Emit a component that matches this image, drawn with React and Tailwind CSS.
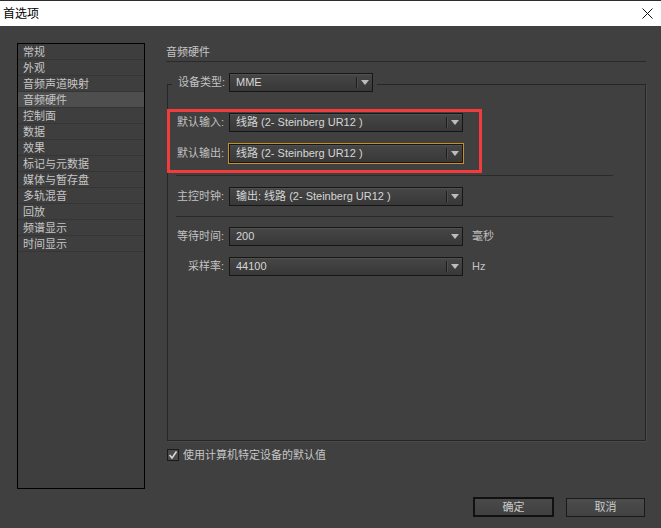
import React from "react";

const F = "font-['Liberation_Sans','Noto_Sans_CJK_SC',sans-serif]";

function Arrow() {
  return (
    <svg width="8" height="5" viewBox="0 0 8 5">
      <path d="M0 0H8L4 5Z" fill="#bcbcbc" />
    </svg>
  );
}

function Dropdown({ value, w, focus, sep = true }) {
  return (
    <div
      className={`relative h-[19px] ${w} flex items-center border border-[#161616] bg-gradient-to-b from-[#464646] to-[#383838] shadow-[inset_0_1px_0_#505050] ${
        focus ? "outline outline-1 outline-[#c8901c]" : ""
      }`}
    >
      <span className="flex-1 pl-[6px] text-[11px] leading-[17px] text-[#d6d6d6] whitespace-nowrap overflow-hidden">
        {value}
      </span>
      <div className={`h-[11px] w-px ${sep ? "bg-[#1c1c1c] shadow-[1px_0_0_#4e4e4e]" : ""}`} />
      <div className="w-[15px] flex justify-center">
        <Arrow />
      </div>
    </div>
  );
}

function Row({ label, value, w = "w-[234px]", focus, sep = true, unit }) {
  return (
    <div className="flex items-center h-[19px]">
      <span className="w-[56px] text-right text-[11px] leading-[15px] text-[#c2c2c2] whitespace-nowrap">
        {label}
      </span>
      <div className="ml-[5px]">
        <Dropdown value={value} w={w} focus={focus} sep={sep} />
      </div>
      {unit && (
        <span className="ml-[9px] text-[11px] leading-[15px] text-[#c2c2c2]">{unit}</span>
      )}
    </div>
  );
}

const items = [
  "常规",
  "外观",
  "音频声道映射",
  "音频硬件",
  "控制面",
  "数据",
  "效果",
  "标记与元数据",
  "媒体与暂存盘",
  "多轨混音",
  "回放",
  "频谱显示",
  "时间显示",
];

export default function App() {
  return (
    <div className={`w-[661px] h-[528px] bg-[#404040] flex flex-col overflow-hidden ${F}`}>
      <div className="h-[26px] bg-white border-t border-[#2e2e2e] flex items-center justify-between pl-[3px] pr-[8px]">
        <span className="text-[12px] leading-[16px] text-black">首选项</span>
        <svg width="11" height="11" viewBox="0 0 11 11">
          <path d="M0.5 0.5L10.5 10.5M10.5 0.5L0.5 10.5" stroke="#111" strokeWidth="1" />
        </svg>
      </div>
      <div className="flex pl-[17px] pt-[17px]">
        <div className="w-[128px] h-[446px] border border-black bg-[#3e3e3e]">
          {items.map((t) => (
            <div
              key={t}
              className={`h-[16px] border-b border-[#353535] pl-[5px] pt-px flex items-center text-[11px] leading-[15px] text-[#c6c6c6] ${
                t === "音频硬件" ? "bg-[#4e4e4e]" : ""
              }`}
            >
              {t}
            </div>
          ))}
        </div>

        <div className="ml-[21px] w-[480px] flex flex-col">
          <div className="h-[18px] flex items-center text-[11px] leading-[15px] text-[#c6c6c6]">
            音频硬件
          </div>
          <div className="h-px bg-[#2a2a2a]" />

          <div className="relative mt-[22px] ml-px w-[479px] h-[357px] border border-[#262626] shadow-[1px_1px_0_#4a4a4a] pt-[28px]">
            <div className="absolute top-[-12px] left-[4px] flex items-center pl-[6px] pr-[4px] bg-[#404040]">
              <span className="w-[47px] text-[11px] leading-[15px] text-[#c2c2c2] whitespace-nowrap">
                设备类型:
              </span>
              <div className="ml-[4px]">
                <Dropdown value="MME" w="w-[144px]" />
              </div>
            </div>

            <div className="absolute left-[-1px] top-[24px] w-[315px] h-[64px] border-[3px] border-[#f23c3c]" />

            <Row label="默认输入:" value="线路 (2- Steinberg UR12 )" />
            <div className="mt-[12px]">
              <Row label="默认输出:" value="线路 (2- Steinberg UR12 )" focus />
            </div>
            <div className="mt-[12px] ml-[8px] w-[437px] h-px bg-[#2a2a2a]" />
            <div className="mt-[11px]">
              <Row label="主控时钟:" value="输出: 线路 (2- Steinberg UR12 )" />
            </div>
            <div className="mt-[10px] ml-[8px] w-[437px] h-px bg-[#2a2a2a]" />
            <div className="mt-[10px]">
              <Row label="等待时间:" value="200" sep={false} unit="毫秒" />
            </div>
            <div className="mt-[11px]">
              <Row label="采样率:" value="44100" unit="Hz" />
            </div>
          </div>

          <div className="mt-[8px] ml-px flex items-center h-[12px]">
            <div className="w-[12px] h-[12px] border border-[#1a1a1a] bg-[#4a4a4a] flex items-center justify-center">
              <svg width="10" height="10" viewBox="0 0 10 10">
                <path d="M1.5 5L4 8L8.5 1.5" stroke="#d8d8d8" strokeWidth="1.6" fill="none" />
              </svg>
            </div>
            <span className="ml-[4px] text-[11px] leading-[15px] text-[#c6c6c6]">
              使用计算机特定设备的默认值
            </span>
          </div>

          <div className="mt-[36px] flex justify-end items-start pr-px">
            <div className="w-[81px] h-[20px] border-2 border-[#111] bg-gradient-to-b from-[#4a4a4a] to-[#404040] flex items-center justify-center text-[11px] leading-[15px] text-[#cacaca]">
              确定
            </div>
            <div className="ml-[12px] mt-px w-[79px] h-[19px] border border-[#1a1a1a] bg-gradient-to-b from-[#4c4c4c] to-[#424242] flex items-center justify-center text-[11px] leading-[15px] text-[#cacaca]">
              取消
            </div>
          </div>
        </div>
      </div>
    </div>
  );
}
